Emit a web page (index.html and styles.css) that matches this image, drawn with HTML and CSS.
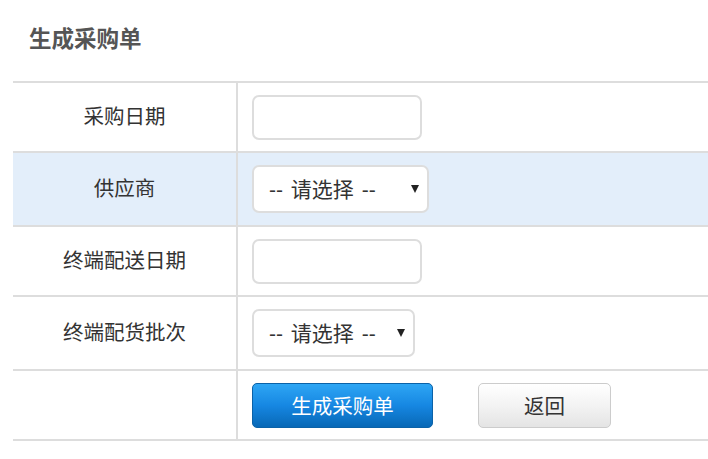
FILE: index.html
```html
<!DOCTYPE html>
<html lang="zh-CN">
<head>
<meta charset="utf-8">
<title>生成采购单</title>
<link rel="stylesheet" href="styles.css">
</head>
<body>
<div class="page">
  <h1 class="title">生成采购单</h1>
  <table class="form-table">
    <tr>
      <td class="label">采购日期</td>
      <td class="field"><input class="text-input" type="text"></td>
    </tr>
    <tr class="highlight">
      <td class="label">供应商</td>
      <td class="field">
        <span class="select-wrap select-wide">
          <select class="select"><option>-- 请选择 --</option></select>
          <span class="arrow"></span>
        </span>
      </td>
    </tr>
    <tr>
      <td class="label">终端配送日期</td>
      <td class="field"><input class="text-input" type="text"></td>
    </tr>
    <tr class="tall">
      <td class="label">终端配货批次</td>
      <td class="field">
        <span class="select-wrap select-narrow">
          <select class="select"><option>-- 请选择 --</option></select>
          <span class="arrow"></span>
        </span>
      </td>
    </tr>
    <tr>
      <td class="label"></td>
      <td class="field">
        <div class="actions">
          <button class="btn btn-primary" type="button">生成采购单</button>
          <button class="btn btn-default" type="button">返回</button>
        </div>
      </td>
    </tr>
  </table>
</div>
</body>
</html>
```

FILE: styles.css
```css
* { box-sizing: border-box; }

html, body {
  margin: 0;
  padding: 0;
  background: #fff;
}

body {
  font-family: "Noto Sans CJK SC", "Noto Sans", sans-serif;
  color: #333;
}

.page {
  padding: 0 0 0 13px;
}

.title {
  margin: 0;
  padding: 22px 0 0 16px;
  height: 81px;
  font-size: 22.5px;
  line-height: 30px;
  font-weight: bold;
  color: #555;
}

.form-table {
  width: calc(100% + 2px);
  border-collapse: collapse;
  border-spacing: 0;
}

.form-table td {
  border-top: 2px solid #dddddd;
  border-bottom: 2px solid #dddddd;
  height: 70px;
  padding: 0 14px;
  vertical-align: middle;
}

.form-table tr.highlight td,
.form-table tr.tall td {
  height: 74px;
}

.form-table tr.highlight td {
  background: #e3eefa;
}

.form-table td.label {
  width: 224px;
  border-right: 2px solid #dddddd;
  text-align: center;
  font-size: 20.5px;
  color: #333;
  padding-bottom: 4px;
}

.text-input {
  display: block;
  width: 170px;
  height: 45px;
  border: 2px solid #dddddd;
  border-radius: 7px;
  background: #fff;
  outline: none;
}

.select-wrap {
  position: relative;
  display: block;
  height: 48px;
}

.select-wide { width: 177px; }
.select-narrow { width: 163px; }

.select {
  -webkit-appearance: none;
  appearance: none;
  display: block;
  width: 100%;
  height: 100%;
  border: 2px solid #dddddd;
  border-radius: 7px;
  background: #fff;
  padding: 0 0 0 15px;
  font-family: "Liberation Sans", "Noto Sans CJK SC", sans-serif;
  font-size: 21px;
  word-spacing: 2px;
  color: #333;
  outline: none;
}

.arrow {
  position: absolute;
  right: 10px;
  top: 20px;
  width: 0;
  height: 0;
  border-left: 4px solid transparent;
  border-right: 4px solid transparent;
  border-top: 8px solid #222;
  pointer-events: none;
}

.actions {
  display: flex;
  align-items: center;
  gap: 45px;
}

.btn {
  height: 45px;
  border-radius: 5px;
  font-family: "Noto Sans CJK SC", "Noto Sans", sans-serif;
  font-size: 20.5px;
  padding: 0;
  cursor: pointer;
}

.btn-primary {
  width: 181px;
  color: #fff;
  border: 1px solid #0b62a8;
  background: linear-gradient(to bottom, #2ea6f4 0%, #1687e2 50%, #0868b6 100%);
}

.btn-default {
  width: 133px;
  color: #333;
  border: 1px solid #cccccc;
  background: linear-gradient(to bottom, #ffffff 0%, #f3f3f3 50%, #e4e4e4 100%);
}
```
